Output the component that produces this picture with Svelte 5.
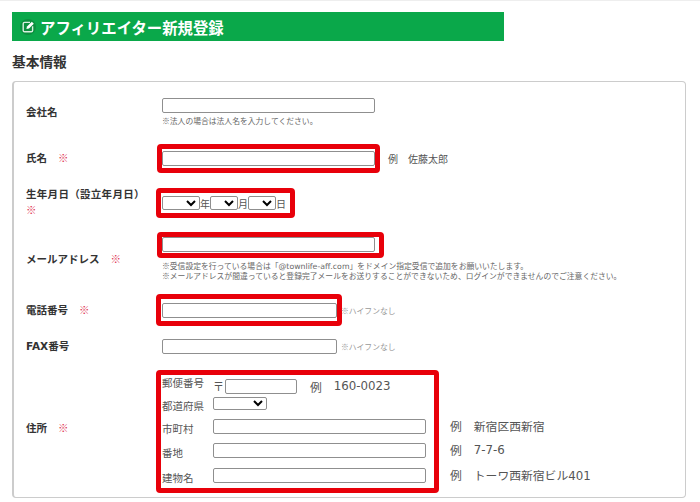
<script>
  const jp = 'ja';
</script>

<div class="page" lang={jp}>
  <h1 class="title">
    <svg class="title-icon" viewBox="0 0 16 16" width="16" height="16" aria-hidden="true">
      <circle cx="8" cy="8" r="8" fill="#0c8f3e" />
      <path d="M10 3.4H4.6Q3.2 3.4 3.2 4.8v6.6q0 1.4 1.4 1.4h6.6q1.4 0 1.4-1.4V7.2" fill="none" stroke="#d9efe0" stroke-width="1.4" />
      <path d="M6.4 10 7 7.6 11.8 2.8 13.8 4.8 9 9.4Z" fill="#fff" />
    </svg>
    アフィリエイター新規登録
  </h1>

  <h2 class="section">基本情報</h2>

  <div class="card">
    <div class="row r1">
      <div class="label">会社名</div>
      <div class="value">
        <input class="wide" type="text" />
        <p class="note first">※法人の場合は法人名を入力してください。</p>
      </div>
    </div>

    <div class="row r2">
      <div class="label nudge">氏名<span class="req">※</span></div>
      <div class="value inline">
        <div class="mark name"><input class="wide" type="text" /></div>
        <span class="example">例</span><span class="example sample">佐藤太郎</span>
      </div>
    </div>

    <div class="row r3">
      <div class="label nudge"><span class="long">生年月日（設立年月日）</span><br /><span class="req flush">※</span></div>
      <div class="value inline">
        <div class="mark dob">
          <select class="date"></select><span>年</span>
          <select class="date small"></select><span>月</span>
          <select class="date small"></select><span>日</span>
        </div>
      </div>
    </div>

    <div class="row r4">
      <div class="label">メールアドレス<span class="req">※</span></div>
      <div class="value">
        <div class="mark mail"><input class="wide" type="text" /></div>
        <p class="note mail-note">※受信設定を行っている場合は「<span class="latin">@townlife-aff.com</span>」をドメイン指定受信で追加をお願いいたします。</p>
        <p class="note">※メールアドレスが間違っていると登録完了メールをお送りすることができないため、ログインができませんのでご注意ください。</p>
      </div>
    </div>

    <div class="row r5">
      <div class="label">電話番号<span class="req">※</span></div>
      <div class="value inline">
        <div class="mark tel"><input class="phone" type="text" /></div>
        <span class="hint">※ハイフンなし</span>
      </div>
    </div>

    <div class="row r6">
      <div class="label"><span class="latin">FAX</span>番号</div>
      <div class="value inline">
        <input class="phone" type="text" />
        <span class="hint">※ハイフンなし</span>
      </div>
    </div>

    <div class="row r7">
      <div class="label raised">住所<span class="req">※</span></div>
      <div class="value">
        <div class="mark address">
          <div class="addr-row zip">
            <span class="addr-label">郵便番号</span>
            <span class="postal">〒</span>
            <input class="zip-input" type="text" />
            <span class="addr-ex zip-ex">例</span>
            <span class="addr-sample latin">160-0023</span>
          </div>
          <div class="addr-row pref">
            <span class="addr-label">都道府県</span>
            <select class="pref-select"></select>
          </div>
          <div class="addr-row line first-line">
            <span class="addr-label">市町村</span>
            <input class="addr-input" type="text" />
            <span class="addr-ex outside">例</span>
            <span class="addr-sample">新宿区西新宿</span>
          </div>
          <div class="addr-row line">
            <span class="addr-label">番地</span>
            <input class="addr-input" type="text" />
            <span class="addr-ex outside">例</span>
            <span class="addr-sample latin">7-7-6</span>
          </div>
          <div class="addr-row line">
            <span class="addr-label">建物名</span>
            <input class="addr-input" type="text" />
            <span class="addr-ex outside">例</span>
            <span class="addr-sample">トーワ西新宿ビル<span class="latin">401</span></span>
          </div>
        </div>
      </div>
    </div>
  </div>
</div>

<style>
  :global(body) {
    background: #fff;
  }

  .page {
    box-sizing: border-box;
    width: 700px;
    height: 502px;
    overflow: hidden;
    padding: 12px 14px 0 12px;
    border-top: 1px solid #eee;
    color: #333;
    font-family: "Noto Sans CJK JP", sans-serif;
    text-spacing-trim: space-all;
  }

  .latin {
    font-family: "DejaVu Sans", sans-serif;
  }

  .title {
    box-sizing: border-box;
    display: flex;
    align-items: center;
    gap: 4px;
    width: 492px;
    height: 29px;
    margin: -1px 0 0;
    padding-left: 8px;
    background: #0aa84a;
    color: #fff;
    font-size: 15.4px;
    font-weight: 700;
  }

  .section {
    margin: 12px 0 0;
    height: 16px;
    font-size: 13.7px;
    line-height: 16px;
    font-weight: 700;
    color: #333;
  }

  .card {
    box-sizing: border-box;
    height: 417px;
    margin-top: 12px;
    padding: 16px 0 0 12px;
    border: 1px solid #ccc;
    border-left-width: 2px;
    border-radius: 4px;
  }

  .row {
    display: grid;
    grid-template-columns: 136px 1fr;
    align-items: center;
  }

  .r2 { margin-top: 24px; }
  .r3 { margin-top: 18px; }
  .r4 { margin-top: 17px; }
  .r5 { margin-top: 19px; }
  .r6 { margin-top: 17px; }
  .r7 { margin-top: 21px; }

  .label {
    font-size: 10.5px;
    font-weight: 700;
    line-height: 16px;
    color: #333;
  }

  .label.nudge {
    margin-bottom: 2px;
  }

  .label.raised {
    margin-bottom: 8px;
  }

  .long {
    letter-spacing: 0.3px;
  }

  .req {
    margin-left: 11px;
    color: #e0304f;
    font-weight: 400;
  }

  .req.flush {
    margin-left: 0;
  }

  input {
    box-sizing: border-box;
    display: block;
    margin: 0;
    height: 15px;
    padding: 0 2px;
    background: #fff;
    border: 1px solid #8f8f8f;
    border-radius: 2px;
  }

  select {
    box-sizing: border-box;
    margin: 0;
    padding: 0;
    height: 14px;
    background: #fff;
    border: 1px solid #8f8f8f;
    border-radius: 2px;
    font-size: 9px;
  }

  .wide {
    width: 213px;
  }

  .phone {
    width: 175px;
  }

  .note {
    margin: 0;
    font-size: 7.8px;
    line-height: 9px;
    color: #666;
    white-space: nowrap;
  }

  .note.first {
    margin-top: 3px;
  }

  .note.mail-note {
    margin-top: 8px;
  }

  .inline {
    display: flex;
    align-items: center;
  }

  /* red annotation frame: the border sits outside the box it wraps */
  .mark {
    box-sizing: content-box;
    margin: -5px;
    border: 5px solid #e8000a;
    border-radius: 4px;
  }

  .mark.name {
    display: flex;
    align-items: center;
    width: 213px;
    height: 19px;
  }

  .mark.dob {
    display: flex;
    align-items: center;
    width: 128px;
    height: 20px;
    margin-left: -6px;
    padding-left: 1px;
    font-size: 10px;
    color: #555;
  }

  .date {
    width: 38px;
  }

  .date.small {
    width: 28px;
  }

  .mark.mail {
    width: 217px;
    height: 16px;
  }

  .mark.tel {
    display: flex;
    align-items: center;
    width: 175px;
    height: 22px;
    margin-left: -6px;
    padding-left: 1px;
  }

  .example {
    margin-left: 13px;
    font-size: 10px;
    color: #555;
  }

  .example.sample {
    margin-left: 10px;
  }

  .hint {
    margin-left: 4px;
    font-size: 7.8px;
    color: #999;
  }

  .mark.address {
    width: 272px;
    height: 113px;
    margin-left: -6px;
    padding-left: 1px;
    font-size: 10.5px;
    color: #555;
  }

  .addr-row {
    display: flex;
    align-items: center;
  }

  .addr-row.zip {
    height: 22px;
  }

  .addr-row.zip .addr-label {
    padding-bottom: 8px;
  }

  .addr-row.pref {
    height: 13px;
  }

  .addr-row.pref .addr-label {
    padding-top: 3px;
  }

  .addr-row.line {
    height: 24.5px;
  }

  .addr-row.line .addr-label {
    padding-top: 4px;
  }

  .addr-row.line .addr-ex,
  .addr-row.line .addr-sample {
    padding-bottom: 2px;
  }

  .addr-row.first-line {
    margin-top: 3.75px;
  }

  .addr-label {
    flex: none;
    width: 51px;
    white-space: nowrap;
  }

  .postal {
    width: 12px;
    font-size: 11px;
  }

  .zip-input {
    width: 72px;
  }

  .pref-select {
    width: 54px;
    height: 13px;
  }

  .addr-input {
    flex: none;
    width: 213px;
  }

  .addr-ex {
    font-size: 11.8px;
  }

  .zip-ex {
    margin-left: 13px;
  }

  .outside {
    margin-left: 24px;
  }

  .addr-sample {
    margin-left: 12px;
    font-size: 11.8px;
    white-space: nowrap;
  }
</style>
